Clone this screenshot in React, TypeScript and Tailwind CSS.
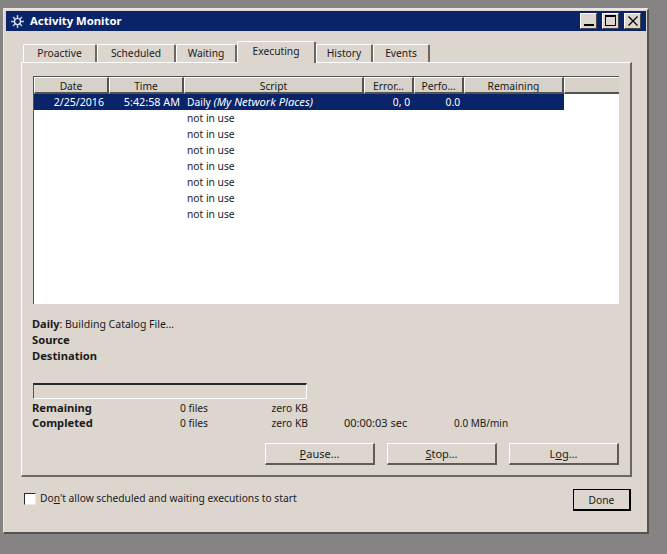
import React from "react";

function Tab({ cls, label, textCls }: { cls: string; label: string; textCls: string }) {
  return (
    <div className={`absolute bg-[#dcd6ce] border-t border-l border-white border-r-2 border-r-[#6b6862] rounded-t-[2px] ${cls}`}>
      <span className={`absolute left-0 right-0 text-center whitespace-nowrap ${textCls}`}>{label}</span>
    </div>
  );
}

function Head({ cls, label }: { cls: string; label: string }) {
  return (
    <div className={`absolute top-[77px] h-[17px] bg-[#d6d1c9] border-t border-l border-t-white border-l-white border-r-2 border-r-[#55534f] border-b-2 border-b-[#55534f] text-center leading-[16px] whitespace-nowrap overflow-hidden ${cls}`}>
      {label}
    </div>
  );
}

function Btn({ cls, children }: { cls: string; children: React.ReactNode }) {
  return (
    <div className={`absolute top-[443px] h-[22px] bg-[#dcd6ce] border-t border-l border-white border-r-2 border-b-2 border-r-[#5f5c57] border-b-[#5f5c57] text-center text-[11px] leading-[19px] ${cls}`}>
      {children}
    </div>
  );
}

function T({ cls, children }: { cls: string; children: React.ReactNode }) {
  return <div className={`absolute whitespace-nowrap leading-[16px] ${cls}`}>{children}</div>;
}

export default function App() {
  const rows = [110, 126, 142, 158, 174, 190, 206];
  return (
    <div className="relative w-[667px] h-[554px] overflow-hidden bg-[#858383] text-[#1a1a1a] text-[10.25px] font-['Noto_Sans','Liberation_Sans',sans-serif]">
      {/* window */}
      <div className="absolute left-[3px] top-[8px] w-[646px] h-[526px] bg-[#dcd6ce] border-t-2 border-l border-t-[#e8e4de] border-l-[#e8e4de] border-r-2 border-b-2 border-r-[#55534f] border-b-[#55534f]" />
      {/* title bar */}
      <div className="absolute left-[6px] top-[11px] w-[640px] h-[20px] bg-[#0a246a]" />
      <svg className="absolute left-[11px] top-[15px] w-[13px] h-[13px]" viewBox="0 0 13 13" fill="none">
        <g stroke="#b9cbe8" strokeWidth="1.5">
          <path d="M6.5 0v13M0 6.5h13M2 2l9 9M11 2l-9 9" />
        </g>
        <circle cx="6.5" cy="6.5" r="3" fill="#0a246a" stroke="#eef2fa" strokeWidth="1.2" />
      </svg>
      <T cls="left-[30px] top-[13px] text-white font-bold text-[11.3px]">Activity Monitor</T>

      {/* window buttons */}
      <div className="absolute left-[580px] top-[13px] w-[17px] h-[16px] bg-[#dcd6ce] border-t border-l border-white border-r border-b border-r-[#444] border-b-[#444]">
        <div className="absolute left-[3px] bottom-[2px] w-[10px] h-[2px] bg-black" />
      </div>
      <div className="absolute left-[602px] top-[13px] w-[17px] h-[16px] bg-[#dcd6ce] border-t border-l border-white border-r border-b border-r-[#444] border-b-[#444]">
        <div className="absolute left-[2px] top-[1px] w-[11px] h-[11px] border border-t-2 border-black" />
      </div>
      <div className="absolute left-[624px] top-[13px] w-[17px] h-[16px] bg-[#dcd6ce] border-t border-l border-white border-r border-b border-r-[#444] border-b-[#444]">
        <svg className="absolute left-[3px] top-[2px] w-[10px] h-[10px]" viewBox="0 0 10 10" fill="none">
          <path d="M0.5 0.5l9 9M9.5 0.5l-9 9" stroke="#000" strokeWidth="1.3" />
        </svg>
      </div>

      {/* tab panel */}
      <div className="absolute left-[21px] top-[62px] w-[611px] h-[415px] border-t border-l border-white border-r-2 border-b-2 border-r-[#6b6862] border-b-[#6b6862]" />

      <Tab cls="left-[23px] top-[44px] w-[74px] h-[18px]" label="Proactive" textCls="top-0 leading-[16px]" />
      <Tab cls="left-[97px] top-[44px] w-[79px] h-[18px]" label="Scheduled" textCls="top-0 leading-[16px]" />
      <Tab cls="left-[176px] top-[44px] w-[61px] h-[18px]" label="Waiting" textCls="top-0 leading-[16px]" />
      <Tab cls="left-[237px] top-[41px] w-[79px] h-[22px] z-10" label="Executing" textCls="top-[1px] leading-[16px]" />
      <Tab cls="left-[316px] top-[44px] w-[57px] h-[18px]" label="History" textCls="top-0 leading-[16px]" />
      <Tab cls="left-[373px] top-[44px] w-[57px] h-[18px]" label="Events" textCls="top-0 leading-[16px]" />

      {/* list */}
      <div className="absolute left-[33px] top-[76px] w-[586px] h-[228px] bg-white border-t border-l border-t-[#55534f] border-l-[#55534f]" />
      <Head cls="left-[34px] w-[75px]" label="Date" />
      <Head cls="left-[109px] w-[75px]" label="Time" />
      <Head cls="left-[184px] w-[180px]" label="Script" />
      <Head cls="left-[364px] w-[50px]" label="Error…" />
      <Head cls="left-[414px] w-[50px]" label="Perfo…" />
      <Head cls="left-[464px] w-[100px]" label="Remaining" />
      <div className="absolute left-[564px] top-[77px] w-[55px] h-[17px] bg-[#d6d1c9] border-t border-l border-white border-b-2 border-b-[#55534f]" />

      <div className="absolute left-[34px] top-[94px] w-[530px] h-[16px] bg-[#0a246a]" />
      <T cls="left-[34px] w-[70px] top-[94px] text-right text-white text-[10.6px]">2/25/2016</T>
      <T cls="left-[109px] w-[71px] top-[94px] text-right text-white text-[10.8px]">5:42:58 AM</T>
      <T cls="left-[187px] top-[94px] text-white">Daily <em className="text-[11.2px]">(My Network Places)</em></T>
      <T cls="left-[364px] w-[46px] top-[94px] text-right text-white">0, 0</T>
      <T cls="left-[414px] w-[46px] top-[94px] text-right text-white">0.0</T>
      {rows.map((y, i) => (
        <div key={i} className="absolute left-[187px] whitespace-nowrap leading-[16px]" style={{ top: y }}>
          not in use
        </div>
      ))}

      {/* details */}
      <T cls="left-[32px] top-[316px]"><b className="text-[11px]">Daily</b><span className="text-[10.5px]">: Building Catalog File…</span></T>
      <T cls="left-[32px] top-[332px] font-bold text-[11.2px]">Source</T>
      <T cls="left-[32px] top-[348px] font-bold text-[11.2px]">Destination</T>

      <div className="absolute left-[33px] top-[383px] w-[274px] h-[16px] border-t-2 border-l border-t-[#2a2927] border-l-[#55534f] border-r border-b border-r-white border-b-white" />

      <T cls="left-[32px] top-[400px] font-bold text-[11.2px]">Remaining</T>
      <T cls="left-[180px] top-[400px]">0 files</T>
      <T cls="left-[248px] w-[60px] top-[400px] text-right">zero KB</T>
      <T cls="left-[32px] top-[415px] font-bold text-[11.2px]">Completed</T>
      <T cls="left-[180px] top-[415px]">0 files</T>
      <T cls="left-[248px] w-[60px] top-[415px] text-right">zero KB</T>
      <T cls="left-[344px] top-[415px] text-[11px]">00:00:03 sec</T>
      <T cls="left-[454px] top-[415px] text-[10px]">0.0 MB/min</T>

      <Btn cls="left-[265px] w-[110px]"><u>P</u>ause…</Btn>
      <Btn cls="left-[387px] w-[110px]"><u>S</u>top…</Btn>
      <Btn cls="left-[509px] w-[110px]">L<u>o</u>g…</Btn>

      {/* footer */}
      <div className="absolute left-[24px] top-[493px] w-[12px] h-[12px] bg-white border-t border-l border-t-[#2a2927] border-l-[#2a2927] border-r border-b border-r-[#eeeae4] border-b-[#eeeae4]" />
      <T cls="left-[40px] top-[490px]">Do<u>n</u>'t allow scheduled and waiting executions to start</T>
      <div className="absolute left-[573px] top-[489px] w-[58px] h-[22px] bg-[#dcd6ce] border border-black border-r-2 border-b-2 text-center leading-[20px]">Done</div>
    </div>
  );
}
